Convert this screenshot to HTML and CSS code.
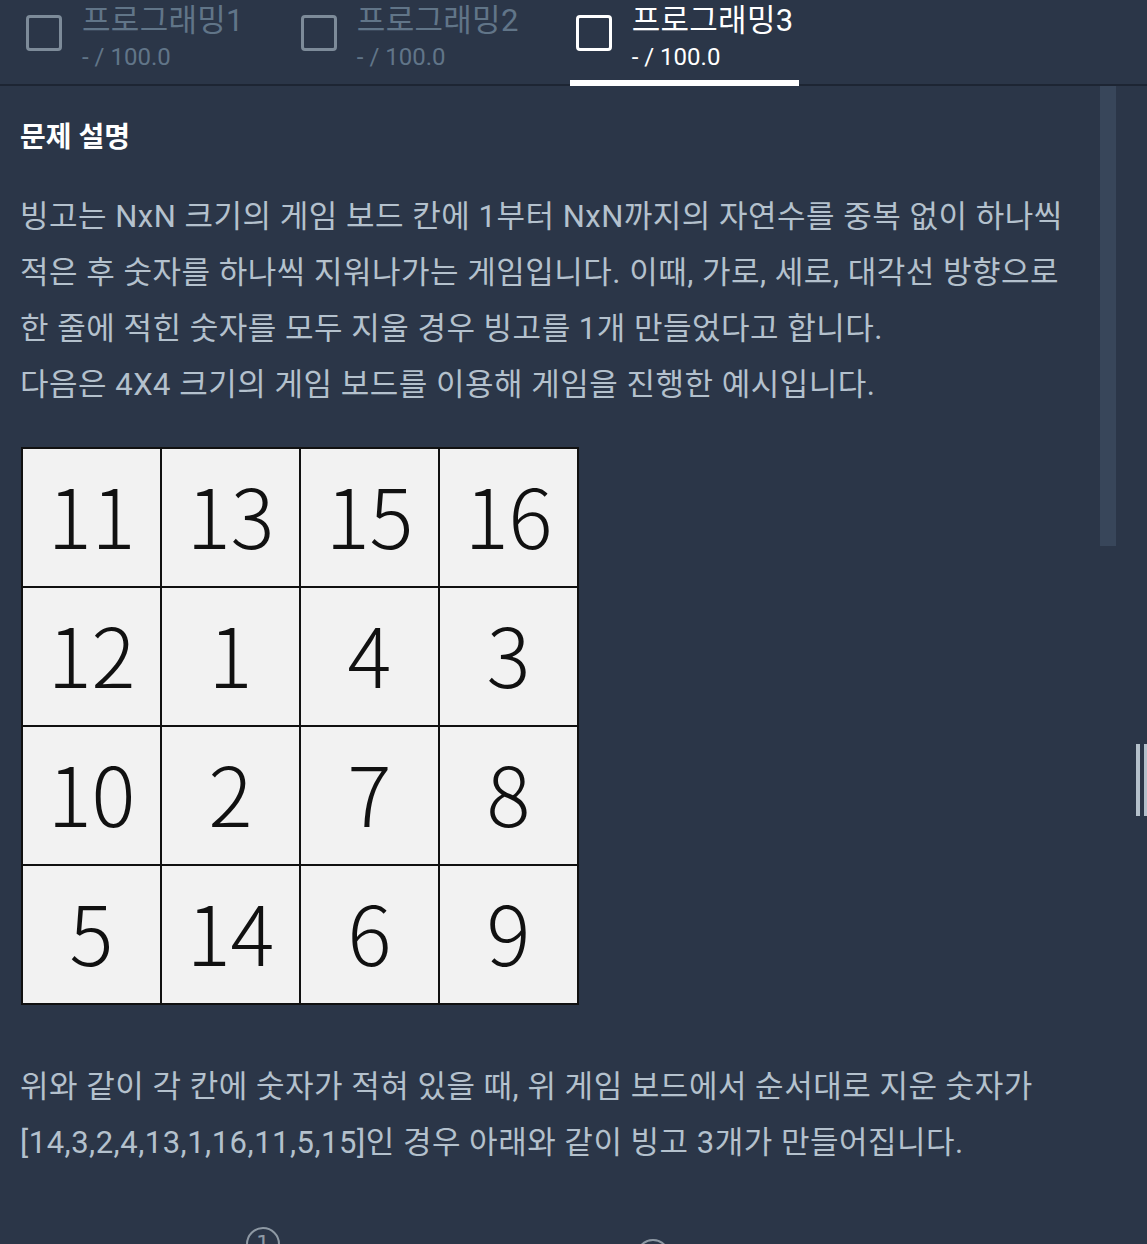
FILE: index.html
```html
<!DOCTYPE html>
<html lang="ko">
<head>
<meta charset="utf-8">
<title>프로그래밍3</title>
<link rel="stylesheet" href="styles.css">
</head>
<body>
<header class="tabs">
  <div class="tab">
    <span class="check"></span>
    <div class="tab-text">
      <div class="tab-title">프로그래밍1</div>
      <div class="tab-score">- / 100.0</div>
    </div>
  </div>
  <div class="tab">
    <span class="check"></span>
    <div class="tab-text">
      <div class="tab-title">프로그래밍2</div>
      <div class="tab-score">- / 100.0</div>
    </div>
  </div>
  <div class="tab active">
    <span class="check"></span>
    <div class="tab-text">
      <div class="tab-title">프로그래밍3</div>
      <div class="tab-score">- / 100.0</div>
    </div>
  </div>
</header>
<main class="content">
  <h2 class="heading">문제 설명</h2>
  <p class="desc">빙고는 NxN 크기의 게임 보드 칸에 1부터 NxN까지의 자연수를 중복 없이 하나씩<br>적은 후 숫자를 하나씩 지워나가는 게임입니다. 이때, 가로, 세로, 대각선 방향으로<br>한 줄에 적힌 숫자를 모두 지울 경우 빙고를 1개 만들었다고 합니다.<br>다음은 4X4 크기의 게임 보드를 이용해 게임을 진행한 예시입니다.</p>
  <div class="board">
    <div class="cell">11</div><div class="cell">13</div><div class="cell">15</div><div class="cell">16</div>
    <div class="cell">12</div><div class="cell">1</div><div class="cell">4</div><div class="cell">3</div>
    <div class="cell">10</div><div class="cell">2</div><div class="cell">7</div><div class="cell">8</div>
    <div class="cell">5</div><div class="cell">14</div><div class="cell">6</div><div class="cell">9</div>
  </div>
  <p class="desc desc2">위와 같이 각 칸에 숫자가 적혀 있을 때, 위 게임 보드에서 순서대로 지운 숫자가<br>[14,3,2,4,13,1,16,11,5,15]인 경우 아래와 같이 빙고 3개가 만들어집니다.</p>
  <div class="figs">
    <span class="circ c1">1</span>
    <span class="circ c2">2</span>
  </div>
  <div class="scrollbar"></div>
</main>
<div class="handle"><span></span><span></span></div>
</body>
</html>
```
FILE: styles.css
```css
html, body {
  margin: 0;
  padding: 0;
  background: #2b3648;
  overflow: hidden;
  height: 1244px;
}
body {
  font-family: Roboto, "Noto Sans CJK KR", sans-serif;
  color: #b4c1cd;
  position: relative;
}
.tabs {
  display: flex;
  height: 84px;
  border-bottom: 2px solid #1d2533;
  padding-left: 20px;
  gap: 45px;
}
.tab {
  position: relative;
  display: flex;
  padding: 0 6px;
  gap: 20px;
}
.check {
  width: 30px;
  height: 30px;
  margin-top: 15px;
  border: 3px solid #7d8b99;
  border-radius: 4px;
  flex: none;
}
.tab-text {
  padding-top: 2px;
}
.tab-title {
  font-size: 31px;
  line-height: 38px;
  letter-spacing: 0.3px;
  color: #617588;
  white-space: nowrap;
}
.tab-score {
  font-size: 24px;
  line-height: 30px;
  margin-top: 2px;
  color: #617588;
  white-space: nowrap;
}
.tab.active .check { border-color: #ffffff; }
.tab.active .tab-title,
.tab.active .tab-score { color: #ffffff; }
.tab.active::after {
  content: "";
  position: absolute;
  left: 0;
  right: 0;
  bottom: -2px;
  height: 6px;
  background: #ffffff;
}
.content {
  position: relative;
  padding: 0 20px;
}
.heading {
  margin: 0;
  padding-top: 34px;
  font-size: 28px;
  line-height: 36px;
  font-weight: 700;
  color: #ffffff;
}
.desc {
  margin: 33px 0 0;
  font-size: 31px;
  line-height: 56px;
  letter-spacing: 0.5px;
  white-space: nowrap;
}
.board {
  margin: 34px 0 0 1px;
  display: grid;
  grid-template-columns: repeat(4, 137px);
  grid-auto-rows: 137px;
  gap: 2px;
  padding: 2px;
  background: #111111;
  width: max-content;
}
.cell {
  background: #f2f2f2;
  color: #111111;
  font-family: "Noto Sans CJK KR", sans-serif;
  font-weight: 300;
  font-size: 82px;
  line-height: 1;
  padding-bottom: 8px;
  display: flex;
  align-items: center;
  justify-content: center;
}
.desc2 {
  margin-top: 54px;
}
.figs {
  display: flex;
  padding-left: 226px;
  padding-top: 56px;
  gap: 356px;
}
.circ {
  width: 30px;
  height: 30px;
  border: 2px solid #8e99a4;
  border-radius: 50%;
  color: #8e99a4;
  font-size: 22px;
  line-height: 30px;
  text-align: center;
  font-family: "DejaVu Sans", sans-serif;
}
.circ.c2 { margin-top: 12px; }
.scrollbar {
  position: absolute;
  top: 0;
  left: 1100px;
  width: 16px;
  height: 460px;
  background: #38465a;
}
.handle {
  position: absolute;
  left: 1136px;
  top: 744px;
  display: flex;
  gap: 4px;
}
.handle span {
  width: 4px;
  height: 72px;
  background: #b4c0cb;
}
```
